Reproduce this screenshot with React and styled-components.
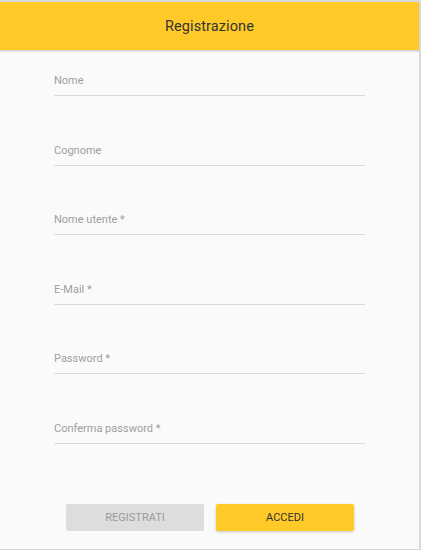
import React from "react";
import styled, { createGlobalStyle } from "styled-components";

const Global = createGlobalStyle`
  html, body { margin: 0; padding: 0; background: #ffffff; }
  body { font-family: Roboto, "Liberation Sans", Arial, sans-serif; }
  * { box-sizing: border-box; }
`;

const Card = styled.div`
  width: 421px;
  height: 550px;
  background: #fafafa;
  border-top: 2px solid #d9d9d9;
  border-right: 2px solid #d9d9d9;
  border-bottom: 1px solid #d9d9d9;
  display: flex;
  flex-direction: column;
`;

const Header = styled.header`
  height: 49px;
  background: #ffca28;
  display: flex;
  align-items: center;
  justify-content: center;
  border-bottom: 1px solid #d4d4d4;
  box-shadow: 0 1px 1px rgba(0, 0, 0, 0.08);
`;

const Title = styled.h1`
  margin: 0;
  font-weight: 400;
  font-size: 14.5px;
  color: #333;
  letter-spacing: 0.1px;
`;

const Form = styled.form`
  display: flex;
  flex-direction: column;
  padding: 23px 0 0 54px;
  gap: 47.6px;
`;

const Field = styled.label`
  display: block;
  width: 311px;
  padding-bottom: 8px;
  border-bottom: 1px solid #dadada;
`;

const LabelText = styled.span`
  display: block;
  font-size: 11px;
  line-height: 13px;
  color: #9e9e9e;
`;

const Actions = styled.div`
  display: flex;
  justify-content: center;
  gap: 12px;
  margin-top: 60px;
  padding-left: 1px;
`;

const Button = styled.button`
  width: 138px;
  height: 27px;
  border: none;
  border-radius: 2px;
  font-family: inherit;
  font-size: 11px;
  text-transform: uppercase;
  background: ${(p) => (p.$primary ? "#ffca28" : "#dddddd")};
  color: ${(p) => (p.$primary ? "#333" : "#9a9a9a")};
  box-shadow: ${(p) => (p.$primary ? "0 1px 3px rgba(0,0,0,0.2)" : "none")};
  cursor: pointer;
`;

const fields = [
  "Nome",
  "Cognome",
  "Nome utente *",
  "E-Mail *",
  "Password *",
  "Conferma password *",
];

export default function App() {
  return (
    <>
      <Global />
      <Card>
        <Header>
          <Title>Registrazione</Title>
        </Header>
        <Form onSubmit={(e) => e.preventDefault()}>
          {fields.map((f) => (
            <Field key={f}>
              <LabelText>{f}</LabelText>
            </Field>
          ))}
        </Form>
        <Actions>
          <Button type="button">Registrati</Button>
          <Button type="button" $primary>
            Accedi
          </Button>
        </Actions>
      </Card>
    </>
  );
}
